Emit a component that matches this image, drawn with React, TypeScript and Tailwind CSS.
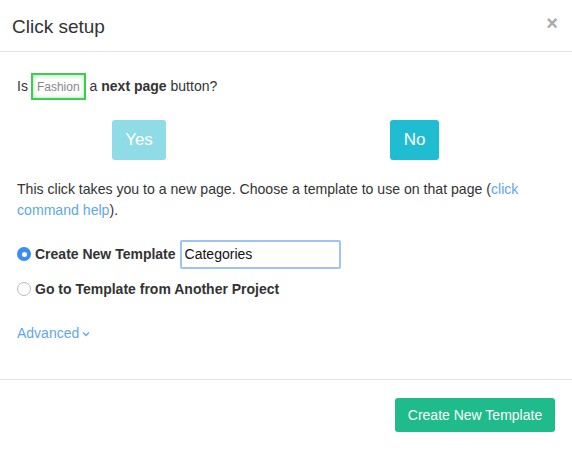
import React from "react";

export default function App() {
  return (
    <div className="w-[572px] h-[450px] bg-white text-[#333] overflow-hidden" style={{ fontFamily: '"Liberation Sans", Arial, sans-serif' }}>
      <div className="h-[52px] border-b border-[#e5e5e5] flex items-center justify-between pl-[12px] pr-[14px]">
        <div className="text-[19px] text-[#333] leading-none pt-[1px]">Click setup</div>
        <div className="text-[#aaa] text-[20px] font-bold leading-none -mt-[6px]">×</div>
      </div>
      <div className="px-[17px]">
        <div className="flex items-center h-[27px] mt-[21px] text-[14px]">
          <span>Is</span>
          <span className="ml-[3px] h-[27px] px-[4px] flex items-center border-2 border-[#3ccf4e] text-[#888] text-[12px] shadow-[inset_0_0_4px_rgba(60,207,78,0.5)]">Fashion</span>
          <span className="ml-[4px]">a <b>next page</b> button?</span>
        </div>
        <div className="flex mt-[20px] h-[40px]">
          <button className="ml-[95px] w-[54px] h-[40px] rounded-[3px] bg-[#8fdce7] text-white text-[17px]">Yes</button>
          <button className="ml-[224px] w-[49px] h-[40px] rounded-[3px] bg-[#1fbcd2] text-white text-[17px]">No</button>
        </div>
        <p className="mt-[19px] text-[14.1px] leading-[21px]">
          This click takes you to a new page. Choose a template to use on that page (<span className="text-[#5fa8df]">click command help</span>).
        </p>
        <div className="flex items-center mt-[19px] h-[28px]">
          <span className="w-[14px] h-[14px] rounded-full bg-[#3b8df0] flex items-center justify-center">
            <span className="w-[5px] h-[5px] rounded-full bg-white" />
          </span>
          <span className="ml-[4px] font-bold text-[14px]">Create New Template</span>
          <input
            readOnly
            value="Categories"
            className="ml-[4px] w-[161px] h-[29px] border-2 border-[#9cc4f5] rounded-[2px] px-[3px] text-[14px] text-[#111] outline-none"
            style={{ fontFamily: '"Liberation Sans", Arial, sans-serif' }}
          />
        </div>
        <div className="flex items-center mt-[10px] h-[22px]">
          <span className="w-[14px] h-[14px] rounded-full border border-[#bbb] bg-white" />
          <span className="ml-[4px] font-bold text-[14px]">Go to Template from Another Project</span>
        </div>
        <div className="mt-[23px] flex items-center text-[14px] text-[#5fa8df] h-[20px]">
          Advanced
          <svg className="ml-[3px] mt-[2px]" width="8" height="6" viewBox="0 0 8 6" fill="none" stroke="#5fa8df" strokeWidth="1.3">
            <path d="M1 1.5 L4 4.5 L7 1.5" />
          </svg>
        </div>
      </div>
      <div className="mt-[36px] border-t border-[#e5e5e5] flex justify-end pr-[17px] pt-[18px]">
        <button className="w-[160px] h-[34px] rounded-[3px] bg-[#1fbb8b] text-white text-[14px]">Create New Template</button>
      </div>
    </div>
  );
}
